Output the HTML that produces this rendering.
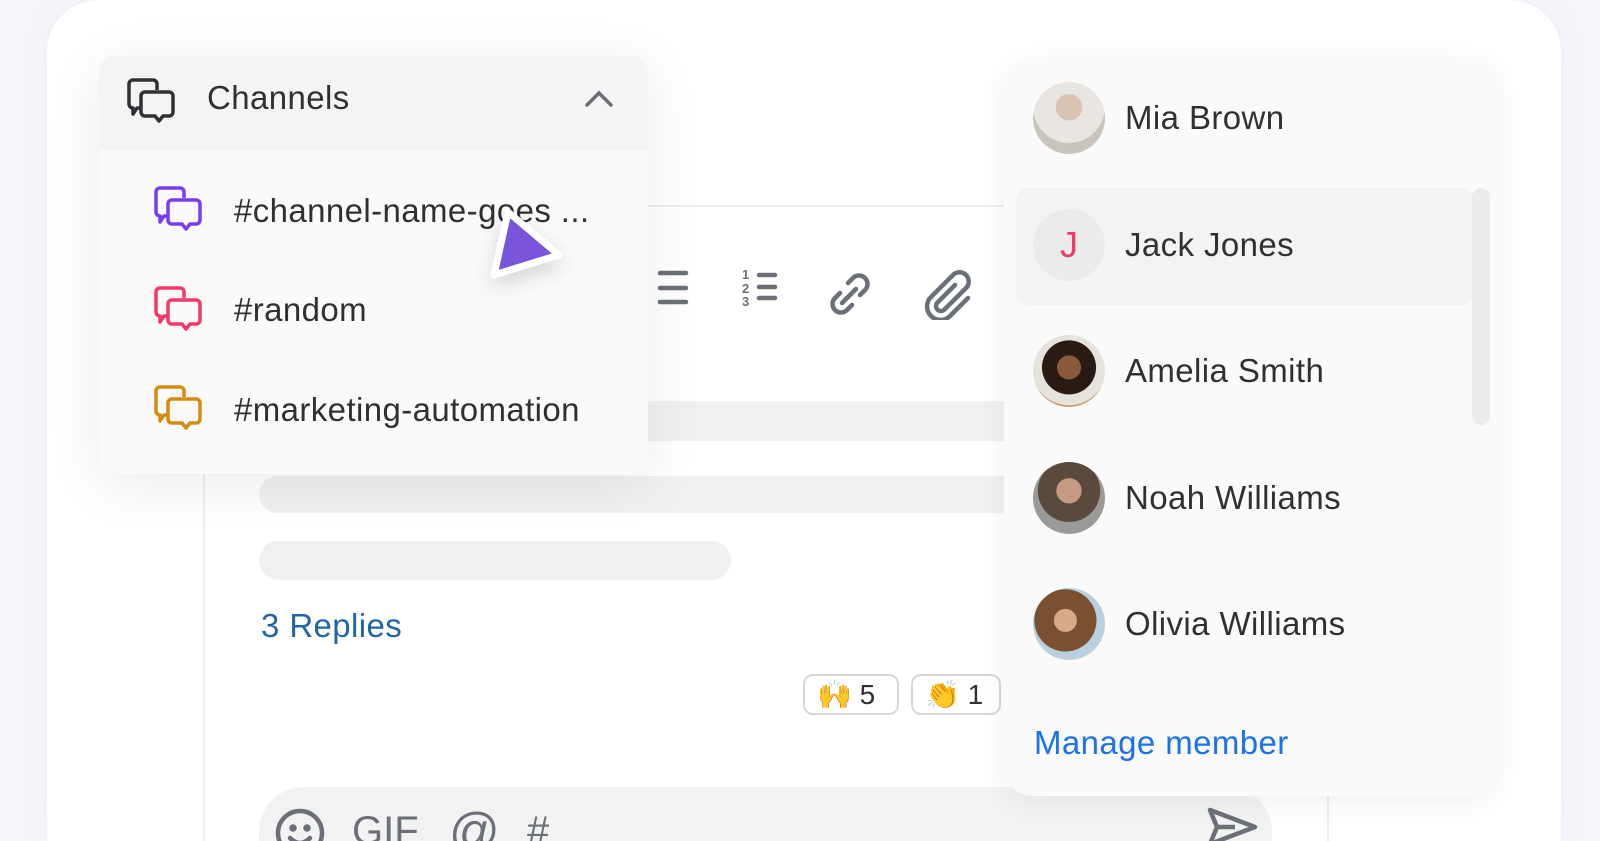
<!DOCTYPE html>
<html><head><meta charset="utf-8"><style>
*{margin:0;padding:0;box-sizing:border-box}
html,body{width:1600px;height:841px;overflow:hidden}
body{background:#f4f6fc;font-family:"Liberation Sans",sans-serif;position:relative;color:#2f3033}
.wrap{position:absolute;left:0;top:0;width:1600px;height:841px;overflow:hidden}
.abs{position:absolute}
.card{left:47px;top:0;width:1514px;height:841px;background:#fff;border-radius:52px 52px 0 0;box-shadow:0 0 40px rgba(0,0,0,.03)}
.dd{left:99px;top:56px;width:549px;height:418px;background:#fafafa;border-radius:16px;box-shadow:0 10px 60px rgba(0,0,0,.08);overflow:hidden}
.ddh{left:0;top:0;width:549px;height:94px;background:#f4f4f4}
.t33{font-size:33px;line-height:40px;white-space:nowrap;letter-spacing:0.4px}
.mp{left:1004px;top:58px;width:493px;height:738px;background:#fafafa;border-radius:28px;box-shadow:0 6px 30px rgba(0,0,0,.06)}
.av{width:72px;height:72px;border-radius:50%}
.pill{height:41px;border:2px solid #d5d7db;border-radius:10px;background:#fff;font-size:28px;line-height:37px;padding-left:12px}
</style></head><body><div class="wrap">
<div class="abs card"></div>
<div class="abs" style="left:648px;top:205px;width:360px;height:2px;background:#efefef"></div>
<div class="abs" style="left:203px;top:470px;width:2px;height:371px;background:#efefef"></div>
<div class="abs" style="left:1327px;top:790px;width:2px;height:51px;background:#efefef"></div>
<div class="abs" style="left:600px;top:401px;width:410px;height:40px;background:#f0f0f0"></div>
<div class="abs" style="left:259px;top:476px;width:760px;height:37px;background:#f0f0f0;border-radius:19px"></div>
<div class="abs" style="left:259px;top:541px;width:472px;height:39px;background:#f0f0f0;border-radius:20px"></div>
<div class="abs t33" style="left:261px;top:606px;color:#2066a6">3 Replies</div>
<div class="abs pill" style="left:803px;top:674px;width:96px">🙌 5</div>
<div class="abs pill" style="left:911px;top:674px;width:90px">👏 1</div>
<svg class="abs" style="left:640px;top:265px" width="340" height="55" viewBox="0 0 340 55" fill="none" stroke="#6b6f78" stroke-width="4.5" stroke-linecap="round">
<path d="M20 8H46M20 23H46M20 37H46"/><circle cx="3" cy="8" r="1.5"/><circle cx="3" cy="23" r="1.5"/><circle cx="3" cy="37" r="1.5"/>
<path d="M119 10H135M119 22H135M119 33H135"/>
<text x="102" y="14" font-size="13" fill="#6b6f78" stroke="none" font-weight="bold">1</text>
<text x="102" y="28" font-size="13" fill="#6b6f78" stroke="none" font-weight="bold">2</text>
<text x="102" y="41" font-size="13" fill="#6b6f78" stroke="none" font-weight="bold">3</text>
<path d="M208 18l5-5a8 8 0 0 1 12 12l-5 5M200 28l-5 5a8 8 0 0 0 12 12l5-5M202 38l14-14"/>
<path d="M315 20l-18 18a5 5 0 0 0 7 7l22-22a9 9 0 0 0-13-13l-22 22a13 13 0 0 0 19 19l18-18"/>
</svg>
<div class="abs" style="left:259px;top:787px;width:1013px;height:54px;background:#f2f2f3;border-radius:45px 45px 0 0"></div>
<svg class="abs" style="left:275px;top:808px" width="52" height="33" viewBox="0 0 52 33" fill="none" stroke="#6b6f78" stroke-width="4.5"><circle cx="25" cy="25" r="22"/><circle cx="18" cy="20" r="1.5" fill="#6b6f78"/><circle cx="32" cy="20" r="1.5" fill="#6b6f78"/><path d="M15 30q10 10 20 0" stroke-linecap="round"/></svg>
<div class="abs" style="left:352px;top:807px;font-size:40px;color:#6b6f78;line-height:48px;height:34px;overflow:hidden">GIF</div>
<div class="abs" style="left:449px;top:803px;font-size:50px;color:#6b6f78;line-height:56px;height:38px;overflow:hidden">@</div>
<div class="abs" style="left:527px;top:807px;font-size:40px;color:#6b6f78;line-height:48px;height:34px;overflow:hidden">#</div>
<svg class="abs" style="left:1205px;top:805px" width="55" height="36" viewBox="0 0 55 36" fill="none" stroke="#6b6f78" stroke-width="4.5" stroke-linejoin="round"><path d="M5 5L50 22 5 39 12 22Z M12 22H30"/></svg>
<div class="abs dd">
 <div class="abs ddh"></div>
 <svg class="abs" style="left:28px;top:22px" width="50" height="48" viewBox="0 0 50 48" fill="none" stroke="#2f3033" stroke-width="3.5" stroke-linejoin="round"><path d="M6 2h20a4 4 0 0 1 4 4v6M14 30h-4l-4 6v-6a4 4 0 0 1-4-4V6a4 4 0 0 1 4-4"/><path d="M18 14h24a4 4 0 0 1 4 4v16a4 4 0 0 1-4 4h-6l-4 5-4-5h-10a4 4 0 0 1-4-4V18a4 4 0 0 1 4-4z"/></svg>
 <div class="abs t33" style="left:108px;top:22px">Channels</div>
 <svg class="abs" style="left:486px;top:34px" width="28" height="18" viewBox="0 0 28 18" fill="none" stroke="#6b6f78" stroke-width="3.5" stroke-linecap="round"><path d="M2 15L14 3 26 15"/></svg>
 <svg class="abs" style="left:55px;top:130px" width="50" height="48" viewBox="0 0 50 48" fill="none" stroke="#7a3cf0" stroke-width="3.5" stroke-linejoin="round"><path d="M6 2h20a4 4 0 0 1 4 4v6M14 30h-4l-4 6v-6a4 4 0 0 1-4-4V6a4 4 0 0 1 4-4"/><path d="M18 14h24a4 4 0 0 1 4 4v16a4 4 0 0 1-4 4h-6l-4 5-4-5h-10a4 4 0 0 1-4-4V18a4 4 0 0 1 4-4z"/></svg>
 <div class="abs t33" style="left:135px;top:135px">#channel-name-goes ...</div>
 <svg class="abs" style="left:55px;top:230px" width="50" height="48" viewBox="0 0 50 48" fill="none" stroke="#f0386b" stroke-width="3.5" stroke-linejoin="round"><path d="M6 2h20a4 4 0 0 1 4 4v6M14 30h-4l-4 6v-6a4 4 0 0 1-4-4V6a4 4 0 0 1 4-4"/><path d="M18 14h24a4 4 0 0 1 4 4v16a4 4 0 0 1-4 4h-6l-4 5-4-5h-10a4 4 0 0 1-4-4V18a4 4 0 0 1 4-4z"/></svg>
 <div class="abs t33" style="left:135px;top:234px">#random</div>
 <svg class="abs" style="left:55px;top:329px" width="50" height="48" viewBox="0 0 50 48" fill="none" stroke="#d48b0f" stroke-width="3.5" stroke-linejoin="round"><path d="M6 2h20a4 4 0 0 1 4 4v6M14 30h-4l-4 6v-6a4 4 0 0 1-4-4V6a4 4 0 0 1 4-4"/><path d="M18 14h24a4 4 0 0 1 4 4v16a4 4 0 0 1-4 4h-6l-4 5-4-5h-10a4 4 0 0 1-4-4V18a4 4 0 0 1 4-4z"/></svg>
 <div class="abs t33" style="left:135px;top:334px">#marketing-automation</div>
</div>
<svg class="abs" style="left:482px;top:200px;filter:drop-shadow(0 8px 10px rgba(0,0,0,.15))" width="95" height="90" viewBox="0 0 95 90"><path d="M26 12L77 55 12 75Z" fill="#7b55d9" stroke="#fff" stroke-width="7" stroke-linejoin="round"/></svg>
<div class="abs mp">
 <div class="abs" style="left:12px;top:130px;width:458px;height:117px;background:#f3f3f4;border-radius:12px"></div>
 <div class="abs" style="left:468px;top:130px;width:18px;height:237px;background:#ebebee;border-radius:9px"></div>
 <div class="abs av" style="left:29px;top:24px;background:radial-gradient(circle at 50% 35%,#d9c3b3 0 22%,#e9e6e1 23% 60%,#c9c4bc 61%)"></div>
 <div class="abs t33" style="left:121px;top:40px">Mia Brown</div>
 <div class="abs av" style="left:29px;top:151px;background:#ebebeb;color:#f0386b;font-size:36px;text-align:center;line-height:72px">J</div>
 <div class="abs t33" style="left:121px;top:167px">Jack Jones</div>
 <div class="abs av" style="left:29px;top:277px;background:radial-gradient(circle at 50% 45%,#8a5a3c 0 22%,#2a1a14 23% 50%,#e6e2dc 51% 70%,#caa070 71%)"></div>
 <div class="abs t33" style="left:121px;top:293px">Amelia Smith</div>
 <div class="abs av" style="left:29px;top:404px;background:radial-gradient(circle at 50% 40%,#c49a80 0 22%,#5a4a3e 23% 55%,#9a9a98 56%)"></div>
 <div class="abs t33" style="left:121px;top:420px">Noah Williams</div>
 <div class="abs av" style="left:29px;top:530px;background:radial-gradient(circle at 45% 45%,#d9a988 0 20%,#7a5030 21% 55%,#b8d0e0 56%)"></div>
 <div class="abs t33" style="left:121px;top:546px">Olivia Williams</div>
 <div class="abs t33" style="left:30px;top:665px;color:#1a73e8">Manage member</div>
</div>
</div></body></html>
